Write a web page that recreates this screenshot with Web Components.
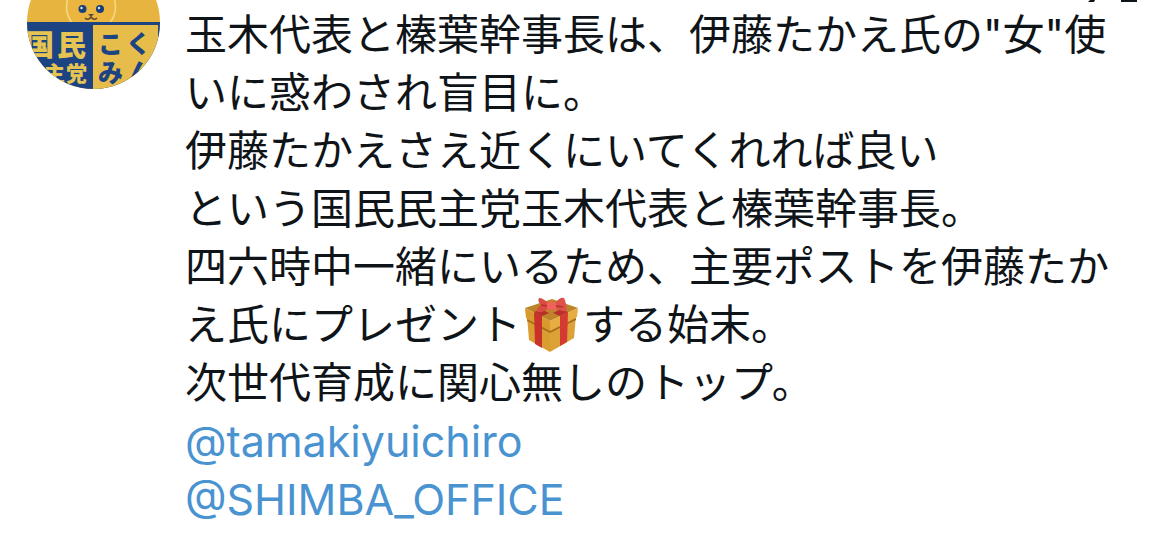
<!DOCTYPE html>
<html lang="ja">
<head>
<meta charset="utf-8">
<meta name="viewport" content="width=device-width, initial-scale=1">
<title>ポスト</title>
<style>
body { margin: 0; background: #fff; color: #0f1419; font-family: Inter, "Noto Sans CJK JP", sans-serif; }
</style>
</head>
<body>
<post-card>
  <post-avatar slot="avatar"></post-avatar>
  <post-actions slot="actions"></post-actions>
  <post-line>玉木代表と榛葉幹事長は、伊藤たかえ氏の"女"使いに惑わされ盲目に。</post-line>
  <post-line>伊藤たかえさえ近くにいてくれれば良い</post-line>
  <post-line>という国民民主党玉木代表と榛葉幹事長。</post-line>
  <post-line>四六時中一緒にいるため、主要ポストを伊藤たかえ氏にプレゼント<gift-emoji></gift-emoji>する始末。</post-line>
  <post-line>次世代育成に関心無しのトップ。</post-line>
  <post-mention handle="tamakiyuichiro"></post-mention>
  <post-mention handle="SHIMBA_OFFICE"></post-mention>
</post-card>

<template id="t-card">
  <style>
    :host { display: block; position: relative; overflow: hidden; }
    article { display: grid; grid-template-columns: 133px minmax(0, 1fr); column-gap: 25px; padding: 0 48px 8px 27px; }
    .body { padding-top: 6px; font-size: 42px; line-height: 58px; }
    .actions { position: absolute; top: 0; right: 32px; }
  </style>
  <article>
    <slot name="avatar"></slot>
    <div class="body"><slot></slot></div>
    <div class="actions"><slot name="actions"></slot></div>
  </article>
</template>

<template id="t-avatar">
  <style>
    :host { display: block; }
    svg { display: block; width: 133px; height: 89px; }
    text { font-family: "Noto Sans CJK JP", sans-serif; font-weight: 900; }
  </style>
  <svg viewBox="0 44 133 89" role="img" aria-label="国民民主党 こくみん">
    <defs><clipPath id="c"><circle cx="66.500" cy="66.500" r="66.500"/></clipPath></defs>
    <g clip-path="url(#c)">
      <rect width="133" height="133" fill="#e8b440"/>
      <circle cx="64" cy="51" r="24.500" fill="#ecb540" stroke="#f6dc80" stroke-width="1.500"/>
      <circle cx="55.500" cy="53" r="4" fill="#173f78"/><circle cx="73" cy="53" r="4" fill="#173f78"/>
      <circle cx="54.500" cy="52" r="1.200" fill="#dfe6ee"/><circle cx="72" cy="52" r="1.200" fill="#dfe6ee"/>
      <path d="M61 58h6l-3 3z" fill="#5d4a31"/>
      <path d="M58 62q3 3 6-1q3 4 6 1" fill="none" stroke="#5d4a31" stroke-width="1.500"/>
      <rect y="66" width="133" height="67" fill="#1d4482"/>
      <rect x="66" y="69" width="65" height="64" fill="#e6bd4b"/>
      <g fill="#e6c452" font-size="29"><text x="-2" y="100">国</text><text x="30" y="100">民</text></g>
      <g fill="#e6c452" font-size="21"><text x="17" y="125">主</text><text x="39" y="125">党</text></g>
      <g fill="#1d4482" font-size="25"><text x="71" y="97">こ</text><text x="99" y="97">く</text><text x="71" y="126">み</text><text x="101" y="126">ん</text></g>
    </g>
  </svg>
</template>

<template id="t-actions">
  <style>:host { display: block; } svg { display: block; width: 52px; height: 4px; }</style>
  <svg viewBox="0 0 52 4" aria-hidden="true"><path d="M5 0h5l-1 2h-6zM36 0h16v2h-16z" fill="#0f1419"/></svg>
</template>

<template id="t-line">
  <style>:host { display: block; } p { margin: 0; line-break: anywhere; }</style>
  <p><slot></slot></p>
</template>

<template id="t-mention">
  <style>:host { display: block; font-size: 43px; } a { color: #4a93d1; text-decoration: none; }</style>
  <a></a>
</template>

<template id="t-gift">
  <style>
    :host { display: inline-block; width: 62px; height: 58px; vertical-align: top; }
    svg { display: block; width: 62px; height: 58px; }
  </style>
  <svg viewBox="0 0 62 58" role="img" aria-label="プレゼント">
    <path d="M6 20L29 31V56L8 44z" fill="#d99d30"/>
    <path d="M55 19L29 31V56L53 42z" fill="#dca137"/>
    <path d="M4 12L31 3L57 12L29 25z" fill="#bd842a"/>
    <path d="M4 12L29 25V35L5 22z" fill="#d99a2d"/>
    <path d="M57 12L29 25V35L56 21z" fill="#e6ad42"/>
    <path d="M6 23L29 35V37L6 25zM55 22L29 35V37L55 24z" fill="#a96d20"/>
    <path d="M13 16L21 20V52L14 48z" fill="#c9322c"/>
    <path d="M47 16L39 20V50L46 46z" fill="#d33a31"/>
    <path d="M13 16L20 13L28 17L21 20zM47 16L40 13L32 17L39 20z" fill="#b92f2b"/>
    <path d="M27 7Q22 2 18 2Q16 5 20 9Q15 12 16 16Q22 17 28 12z" fill="#d94b43"/>
    <path d="M34 7Q39 1 43 2Q46 8 45 15Q39 16 34 12z" fill="#de514a"/>
    <path d="M26 7Q30 4 35 7V13Q31 16 26 13z" fill="#ee625a"/>
    <path d="M20 9L26 10M35 10L42 11" stroke="#b5302d" stroke-width="1.500"/>
  </svg>
</template>

<script>
class TemplateElement extends HTMLElement {
  constructor() {
    super();
    this.attachShadow({ mode: "open" });
    this.shadowRoot.append(document.getElementById(this.constructor.template).content.cloneNode(true));
  }
}
class PostCard extends TemplateElement { static template = "t-card"; }
class PostAvatar extends TemplateElement { static template = "t-avatar"; }
class PostActions extends TemplateElement { static template = "t-actions"; }
class PostLine extends TemplateElement { static template = "t-line"; }
class GiftEmoji extends TemplateElement { static template = "t-gift"; }
class PostMention extends TemplateElement {
  static template = "t-mention";
  connectedCallback() {
    const link = this.shadowRoot.querySelector("a");
    const handle = this.getAttribute("handle");
    link.textContent = "@" + handle;
    link.href = "#" + handle;
  }
}
customElements.define("post-card", PostCard);
customElements.define("post-avatar", PostAvatar);
customElements.define("post-actions", PostActions);
customElements.define("post-line", PostLine);
customElements.define("gift-emoji", GiftEmoji);
customElements.define("post-mention", PostMention);
</script>
</body>
</html>
